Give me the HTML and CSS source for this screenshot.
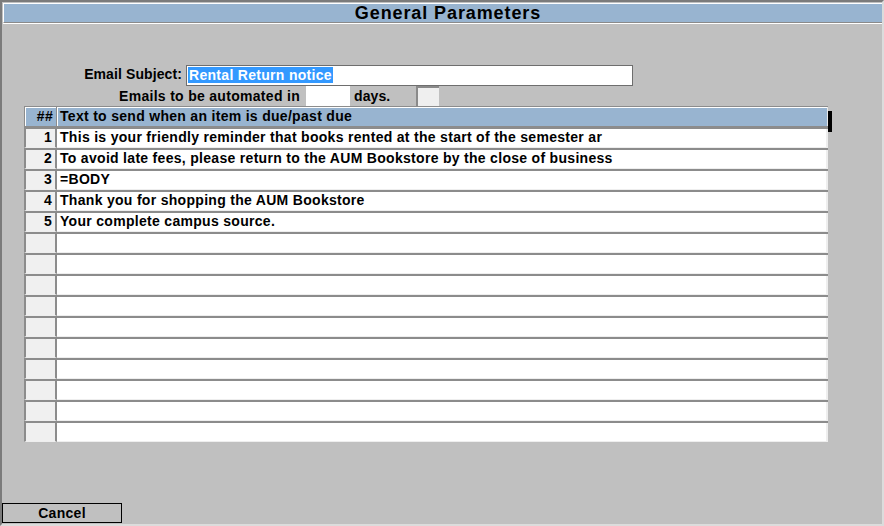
FILE: index.html
```html
<!DOCTYPE html>
<html>
<head>
<meta charset="utf-8">
<title>General Parameters</title>
<link rel="stylesheet" href="styles.css">
</head>
<body>
<div class="window">
  <div class="titlebar">General Parameters</div>
  <div class="form">
    <div class="frow">
      <div class="label label-subject">Email Subject:</div>
      <div class="textbox"><span class="sel">Rental Return notice</span></div>
    </div>
    <div class="frow">
      <div class="label label-days">Emails to be automated in</div>
      <div class="daybox"></div>
      <div class="label label-unit">days.</div>
      <div class="smallbox"></div>
    </div>
  </div>
  <div class="grid">
    <div class="ghead">
      <div class="hnum">##</div>
      <div class="htxt">Text to send when an item is due/past due</div>
    </div>
    <div class="grow"><div class="num">1</div><div class="txt">This is your friendly reminder that books rented at the start of the semester ar</div></div>
    <div class="grow"><div class="num">2</div><div class="txt">To avoid late fees, please return to the AUM Bookstore by the close of business</div></div>
    <div class="grow"><div class="num">3</div><div class="txt">=BODY</div></div>
    <div class="grow"><div class="num">4</div><div class="txt">Thank you for shopping the AUM Bookstore</div></div>
    <div class="grow"><div class="num">5</div><div class="txt">Your complete campus source.</div></div>
    <div class="grow"><div class="num"></div><div class="txt"></div></div>
    <div class="grow"><div class="num"></div><div class="txt"></div></div>
    <div class="grow"><div class="num"></div><div class="txt"></div></div>
    <div class="grow"><div class="num"></div><div class="txt"></div></div>
    <div class="grow"><div class="num"></div><div class="txt"></div></div>
    <div class="grow"><div class="num"></div><div class="txt"></div></div>
    <div class="grow"><div class="num"></div><div class="txt"></div></div>
    <div class="grow"><div class="num"></div><div class="txt"></div></div>
    <div class="grow"><div class="num"></div><div class="txt"></div></div>
    <div class="grow"><div class="num"></div><div class="txt"></div></div>
  </div>
  <div class="cursor"></div>
  <button class="cancel">Cancel</button>
</div>
</body>
</html>
```

FILE: styles.css
```css
* { box-sizing: border-box; }
html, body { margin: 0; padding: 0; }
body {
  width: 884px;
  height: 526px;
  overflow: hidden;
  background: #c0c0c0;
  font-family: "Liberation Sans", Arial, sans-serif;
  font-weight: bold;
  font-size: 14px;
  letter-spacing: 0.3px;
  color: #000;
}
.window {
  position: relative;
  width: 884px;
  height: 526px;
  border-top: 2px solid #7b7b7b;
  border-left: 2px solid #7b7b7b;
  border-right: 2px solid #dcdcdc;
  border-bottom: 2px solid #dcdcdc;
  display: flex;
  flex-direction: column;
}
.titlebar {
  margin: 1px 0 0 1px;
  height: 20px;
  background: #98b4d0;
  border-top: 1px solid #fff;
  border-left: 1px solid #fff;
  border-bottom: 1px solid #8a8a8a;
  box-shadow: 0 1px 0 #fff;
  text-align: center;
  font-size: 18px;
  letter-spacing: 0.9px;
  line-height: 18px;
  padding-left: 10px;
}
.form {
  padding-top: 42px;
}
.frow {
  display: flex;
  align-items: flex-start;
  height: 21px;
}
.frow + .frow {
  height: 20px;
}
.label {
  line-height: 20px;
  height: 20px;
}
.label-subject {
  width: 180px;
  text-align: right;
  line-height: 19px;
  letter-spacing: 0.1px;
}
.label-days {
  width: 298px;
  text-align: right;
}
.label-unit {
  width: 66px;
  padding-left: 4px;
  letter-spacing: 0.1px;
}
.textbox {
  margin-left: 4px;
  width: 447px;
  height: 21px;
  background: #fff;
  border: 1px solid #6e6e6e;
  padding: 1px 1px;
}
.sel {
  display: inline-block;
  height: 16px;
  line-height: 16px;
  padding: 0 1px;
  background: #3399ff;
  color: #fff;
}
.daybox {
  margin-left: 6px;
  width: 44px;
  height: 20px;
  background: #fff;
}
.smallbox {
  width: 23px;
  height: 21px;
  flex: none;
  background: #efefef;
  border-top: 2px solid #8a8a8a;
  border-left: 2px solid #8a8a8a;
}
.grid {
  margin-left: 22px;
  width: 804px;
  display: flex;
  flex-direction: column;
}
.ghead {
  display: flex;
  height: 21px;
  border-top: 1px solid #8c8c8c;
  border-bottom: 1px solid #8c8c8c;
}
.hnum, .htxt {
  background: #98b4d0;
  box-shadow: inset 1px 1px 0 #fff;
  line-height: 19px;
}
.hnum {
  width: 33px;
  border-left: 1px solid #8c8c8c;
  border-right: 1px solid #8c8c8c;
  text-align: right;
  padding-right: 3px;
}
.htxt {
  width: 771px;
  padding-left: 3px;
  border-right: 1px solid #e8e8e8;
}
.grow {
  display: flex;
  height: 21px;
  border-top: 2px solid #8c8c8c;
}
.num, .txt {
  height: 19px;
  line-height: 17px;
  border-bottom: 1px solid #eeeeee;
}
.num {
  width: 33px;
  background: #f0f0f0;
  border-left: 2px solid #8c8c8c;
  border-right: 2px solid #8c8c8c;
  text-align: right;
  padding-right: 3px;
}
.txt {
  width: 771px;
  background: #fff;
  border-right: 2px solid #eeeeee;
  padding-left: 3px;
  white-space: nowrap;
  overflow: hidden;
}
.cursor {
  position: absolute;
  left: 826px;
  top: 109px;
  width: 4px;
  height: 21px;
  background: #000;
}
.cancel {
  margin-top: auto;
  margin-bottom: 1px;
  width: 120px;
  height: 20px;
  padding: 0;
  background: #c0c0c0;
  border: 1px solid #000;
  font-family: "Liberation Sans", Arial, sans-serif;
  font-weight: bold;
  font-size: 14px;
  letter-spacing: 0.3px;
  line-height: 18px;
  color: #000;
  text-align: center;
}
```
